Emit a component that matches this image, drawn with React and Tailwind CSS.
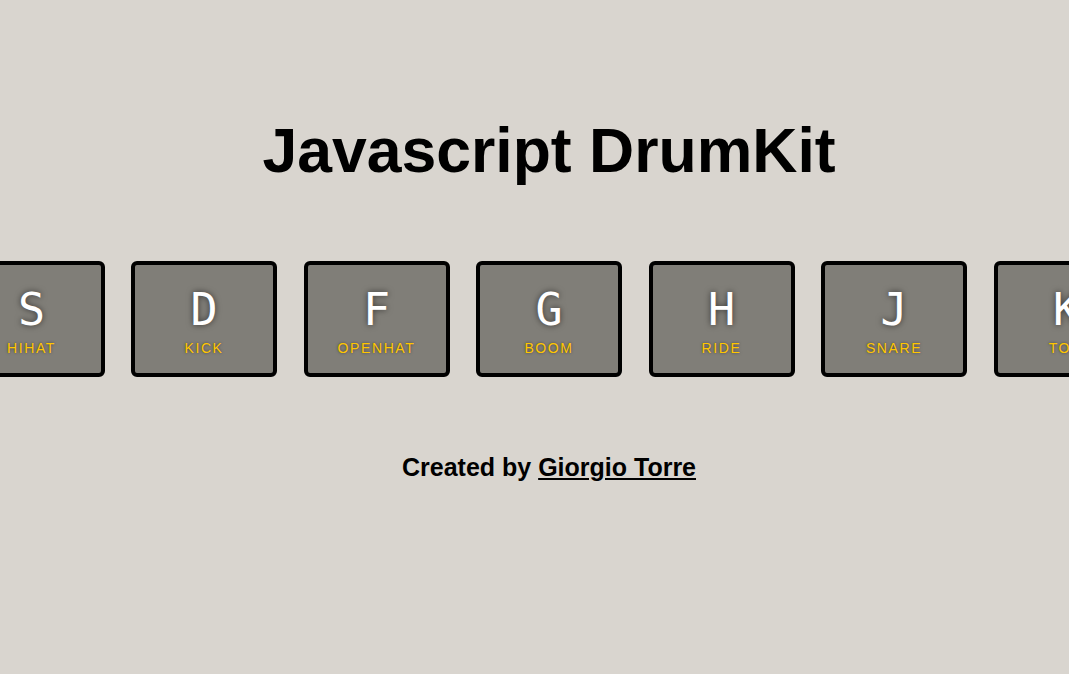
import React from 'react';

const keys = [
  { key: 'A', sound: 'clap' },
  { key: 'S', sound: 'hihat' },
  { key: 'D', sound: 'kick' },
  { key: 'F', sound: 'openhat' },
  { key: 'G', sound: 'boom' },
  { key: 'H', sound: 'ride' },
  { key: 'J', sound: 'snare' },
  { key: 'K', sound: 'tom' },
  { key: 'L', sound: 'tink' },
];

const Key = ({ letter, sound }) => (
  <div className="flex h-[116px] w-[146px] shrink-0 flex-col items-center rounded-[6px] border-4 border-black bg-[#807e78] pt-[17px]">
    <kbd
      className="block text-[45px] leading-[56px] text-white [text-shadow:0_0_6px_rgba(0,0,0,0.6)]"
      style={{ fontFamily: '"DejaVu Sans Mono", monospace' }}
    >
      {letter}
    </kbd>
    <span
      className="text-[14px] uppercase leading-[20px] tracking-[1.6px] text-[#ffc600] [text-shadow:0_0_3px_rgba(0,0,0,0.5)]"
      style={{ fontFamily: '"Liberation Sans", Arial, sans-serif' }}
    >
      {sound}
    </span>
  </div>
);

export default function App() {
  return (
    <div className="min-h-screen w-full overflow-hidden bg-[#d9d5cf]">
      <div
        className="flex w-[1098px] flex-col items-center"
        style={{ fontFamily: '"Liberation Sans", Arial, sans-serif' }}
      >
        <h1 className="mt-[112px] text-[62.5px] font-bold leading-[76px] text-black">
          Javascript DrumKit
        </h1>
        <div className="mt-[73px] flex w-full justify-center gap-[26.5px]">
          {keys.map((k) => (
            <Key key={k.key} letter={k.key} sound={k.sound} />
          ))}
        </div>
        <p className="mt-[76px] text-[25px] font-bold leading-[28px] text-black">
          Created by{' '}
          <a href="#" className="text-black underline">
            Giorgio Torre
          </a>
        </p>
      </div>
    </div>
  );
}
